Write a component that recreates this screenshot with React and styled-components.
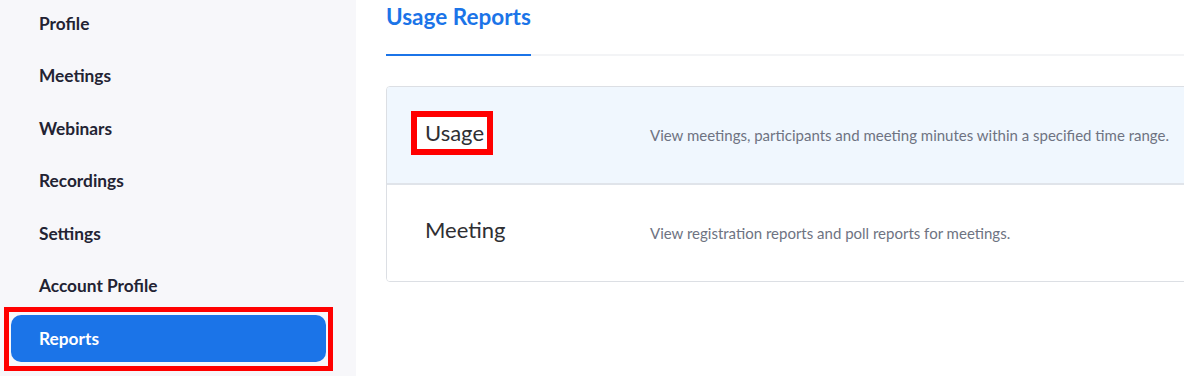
import React from "react";
import styled, { createGlobalStyle } from "styled-components";

const Global = createGlobalStyle`
  html, body { margin: 0; padding: 0; background: #fff; }
  body { font-family: Lato, "Open Sans", Arial, sans-serif; overflow: hidden; }
  * { box-sizing: border-box; }
`;

const Page = styled.div`
  display: flex;
  width: 1184px;
  height: 376px;
  overflow: hidden;
`;

const Sidebar = styled.nav`
  flex: 0 0 356px;
  background: #f7f7fa;
  display: flex;
  flex-direction: column;
  gap: 5.5px;
  padding: 0 30px 0 11px;
  margin-top: -0.5px;
`;

const NavItem = styled.div`
  height: 47px;
  display: flex;
  align-items: center;
  padding-left: 28px;
  border-radius: 10px;
  font-size: 17.3px;
  font-weight: 700;
  color: ${(p) => (p.$active ? "#ffffff" : "#232333")};
  background: ${(p) => (p.$active ? "#1b74e8" : "transparent")};
`;

const Marker = styled.div`
  border: 5px solid #ff0000;
  margin: -8px -7px -10px -7px;
  padding: 3px 2px 4px 2px;
`;

const Main = styled.main`
  flex: 1;
  min-width: 0;
  padding-left: 30px;
  padding-top: 4px;
`;

const Tabs = styled.div`
  display: flex;
  border-bottom: 2px solid #f3f4f6;
  margin-bottom: 30px;
`;

const Tab = styled.div`
  font-size: 22.5px;
  font-weight: 700;
  line-height: 26px;
  color: #1b74e8;
  padding-bottom: 24px;
  border-bottom: 2px solid #1b74e8;
  margin-bottom: -2px;
`;

const Card = styled.div`
  width: 840px;
  border: 1px solid #dcdfe4;
  border-radius: 4px;
  overflow: hidden;
`;

const Row = styled.div`
  height: ${(p) => (p.$last ? "96px" : "98px")};
  display: flex;
  align-items: center;
  padding-left: 38px;
  background: ${(p) => (p.$highlight ? "#f0f7fe" : "#ffffff")};
  border-bottom: ${(p) => (p.$last ? "none" : "2px solid #e0e4ea")};
`;

const TitleCell = styled.div`
  flex: 0 0 225px;
  display: flex;
  align-items: center;
`;

const Title = styled.span`
  font-size: 22px;
  line-height: 26px;
  color: #2f2f33;
  ${(p) =>
    p.$marked
      ? `
    border: 6px solid #ff0000;
    background: #ffffff;
    padding: 3px 3px 3px 8px;
    margin-left: -14px;
    margin-top: -4px;
  `
      : `margin-top: -6px;`}
`;

const Desc = styled.span`
  font-size: 15px;
  color: #6e7382;
`;

const navItems = [
  "Profile",
  "Meetings",
  "Webinars",
  "Recordings",
  "Settings",
  "Account Profile",
];

const reports = [
  {
    title: "Usage",
    desc: "View meetings, participants and meeting minutes within a specified time range.",
    highlight: true,
    marked: true,
  },
  {
    title: "Meeting",
    desc: "View registration reports and poll reports for meetings.",
  },
];

export default function App() {
  return (
    <>
      <Global />
      <Page>
        <Sidebar>
          {navItems.map((n) => (
            <NavItem key={n}>{n}</NavItem>
          ))}
          <Marker>
            <NavItem $active>Reports</NavItem>
          </Marker>
        </Sidebar>
        <Main>
          <Tabs>
            <Tab>Usage Reports</Tab>
          </Tabs>
          <Card>
            {reports.map((r, i) => (
              <Row key={r.title} $highlight={r.highlight} $last={i === reports.length - 1}>
                <TitleCell>
                  <Title $marked={r.marked}>{r.title}</Title>
                </TitleCell>
                <Desc>{r.desc}</Desc>
              </Row>
            ))}
          </Card>
        </Main>
      </Page>
    </>
  );
}
